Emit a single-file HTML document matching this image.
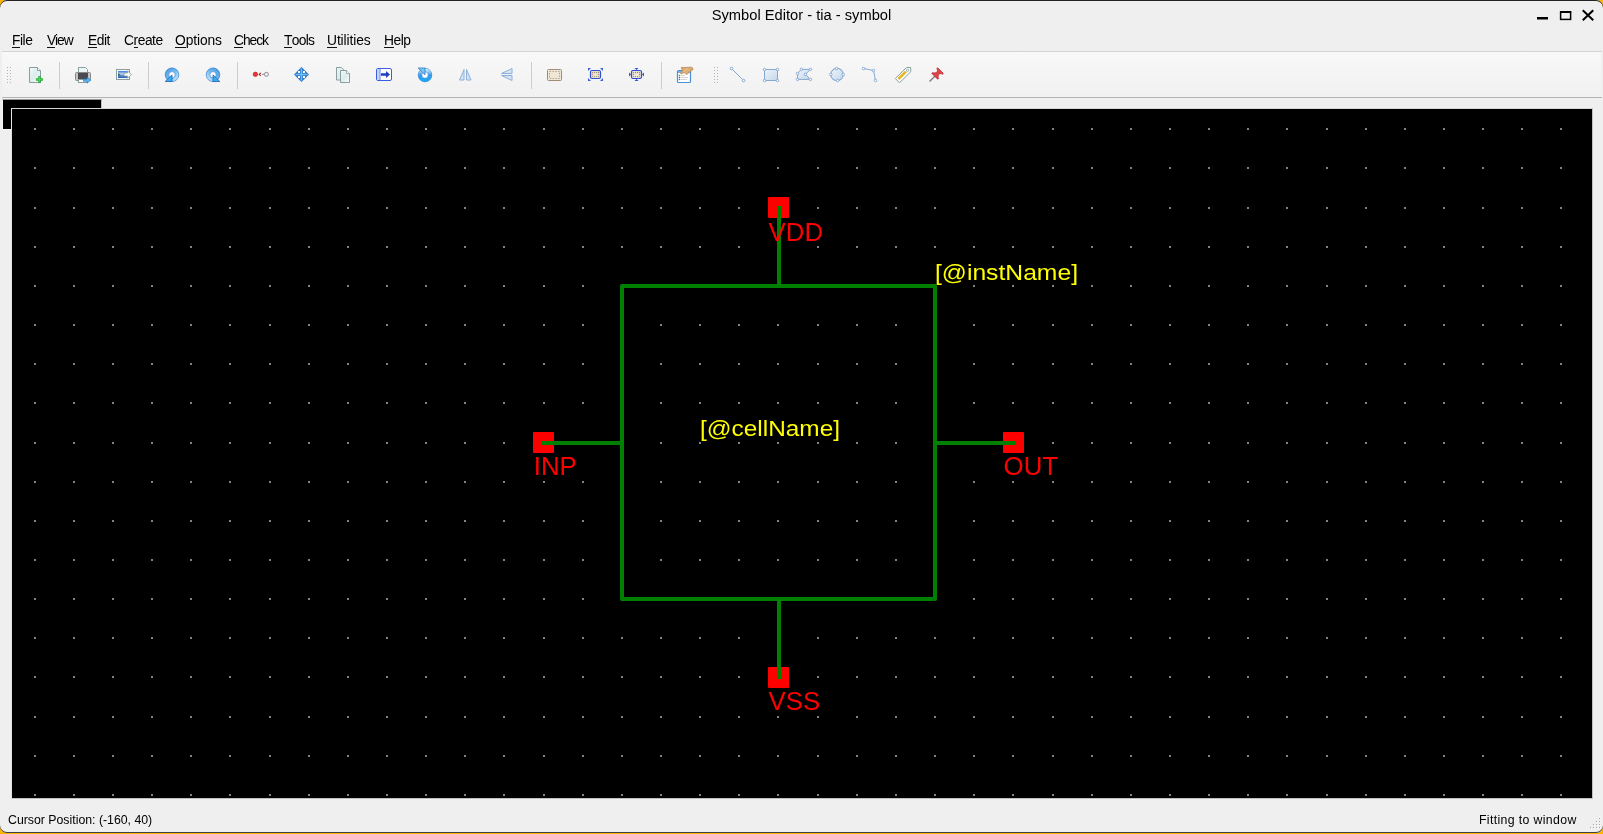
<!DOCTYPE html>
<html><head><meta charset="utf-8">
<style>
html,body{margin:0;padding:0;width:1603px;height:834px;overflow:hidden;background:#ffb400;}
body{position:relative;font-family:"Liberation Sans",sans-serif;}
.win{position:absolute;left:0;top:0;width:1603px;height:833px;background:#efefef;border-radius:7px;box-shadow:inset 0 1px 0 #232323, inset 0 -1px 0 #3a3f48;overflow:hidden;}
.topline{position:absolute;left:0;top:0;width:1603px;height:1px;background:#232323;}
.botline{position:absolute;left:0;top:832px;width:1603px;height:1px;background:#3a3f48;}
.t{position:absolute;white-space:pre;color:#000;line-height:1;will-change:transform;}
.title{left:0;width:1603px;text-align:center;top:8px;font-size:14.7px;color:#000;}
.menu{top:34px;font-size:13.8px;letter-spacing:-0.45px;color:#000;}
.menu u{text-decoration:none;box-shadow:inset 0 -1px 0 #111;display:inline-block;height:14px;}
.tbline1{position:absolute;left:2px;top:51px;width:1600px;height:1px;background:#d4d4d4;}
.toolbar{position:absolute;left:2px;top:52px;width:1599px;height:45px;background:linear-gradient(#f8f8f8,#f1f1f1);}
.tbline2{position:absolute;left:2px;top:97px;width:1600px;height:1px;background:#b4b4b4;}
.sep{position:absolute;top:62px;width:1px;height:27px;background:#c8c8c8;}
.smallblk{position:absolute;left:2px;top:99px;width:98px;height:29px;background:#000;border-top:1px solid #9a9a9a;border-right:1px solid #c0c0c0;border-left:1px solid #f6f6f6;border-bottom:1px solid #f6f6f6;box-sizing:content-box;}
.canvas{position:absolute;left:11px;top:108px;width:1580px;height:689px;background:#000;border-top:1px solid #d6d6d6;border-left:1px solid #e2e2e2;border-right:1px solid #c0c0c0;border-bottom:1px solid #c0c0c0;box-sizing:content-box;}
.status{font-size:12.3px;color:#000;top:814px;}
</style></head><body>
<div class="win">
<div class="t title">Symbol Editor - tia - symbol</div>
<svg style="position:absolute;left:0;top:0" width="1603" height="30">
 <rect x="1537" y="17" width="11" height="2.5" fill="#000"/>
 <rect x="1560.6" y="12" width="10" height="7.4" fill="none" stroke="#000" stroke-width="1.5"/>
 <rect x="1560" y="11" width="11.2" height="2" fill="#000"/>
 <path d="M1583.5 11 L1592.5 19.5 M1592.5 11 L1583.5 19.5" stroke="#000" stroke-width="2" stroke-linecap="square"/>
</svg>
<div class="t menu" style="left:12px"><u>F</u>ile</div>
<div class="t menu" style="left:46.5px;letter-spacing:-1.1px"><u>V</u>iew</div>
<div class="t menu" style="left:88px"><u>E</u>dit</div>
<div class="t menu" style="left:124px">C<u>r</u>eate</div>
<div class="t menu" style="left:175px;letter-spacing:-0.1px"><u>O</u>ptions</div>
<div class="t menu" style="left:233.8px;letter-spacing:-1.05px"><u>C</u>heck</div>
<div class="t menu" style="left:284px;letter-spacing:-0.7px"><u>T</u>ools</div>
<div class="t menu" style="left:327px;letter-spacing:-0.1px"><u>U</u>tilities</div>
<div class="t menu" style="left:384px"><u>H</u>elp</div>
<div class="tbline1"></div>
<div class="toolbar"></div>
<div class="tbline2"></div>
<svg style="position:absolute;left:0;top:0" width="1000" height="98">
 <defs>
  <linearGradient id="docg" x1="0" y1="0" x2="1" y2="1"><stop offset="0" stop-color="#f2fbfb"/><stop offset=".5" stop-color="#dcecec"/><stop offset="1" stop-color="#fbfdfd"/></linearGradient>
  <linearGradient id="blueg" x1="0" y1="0" x2="1" y2="1"><stop offset="0" stop-color="#4f9ee4"/><stop offset=".45" stop-color="#6cb8f0"/><stop offset="1" stop-color="#c0e6fa"/></linearGradient><linearGradient id="blueg2" x1="1" y1="0" x2="0" y2="1"><stop offset="0" stop-color="#4f9ee4"/><stop offset=".45" stop-color="#6cb8f0"/><stop offset="1" stop-color="#c0e6fa"/></linearGradient>
  <linearGradient id="ltb" x1="0" y1="0" x2="1" y2="1"><stop offset="0" stop-color="#eef4fa"/><stop offset="1" stop-color="#c4d6ea"/></linearGradient>
 </defs>
 <!-- handle dots -->
 <g fill="#b2b2b2">
  <rect x="7" y="67" width="1" height="1"/><rect x="10" y="67" width="1" height="1"/>
  <rect x="7" y="70" width="1" height="1"/><rect x="10" y="70" width="1" height="1"/>
  <rect x="7" y="73" width="1" height="1"/><rect x="10" y="73" width="1" height="1"/>
  <rect x="7" y="76" width="1" height="1"/><rect x="10" y="76" width="1" height="1"/>
  <rect x="7" y="79" width="1" height="1"/><rect x="10" y="79" width="1" height="1"/>
  <rect x="7" y="82" width="1" height="1"/><rect x="10" y="82" width="1" height="1"/>
  <rect x="714" y="67" width="1" height="1"/><rect x="717" y="67" width="1" height="1"/>
  <rect x="714" y="70" width="1" height="1"/><rect x="717" y="70" width="1" height="1"/>
  <rect x="714" y="73" width="1" height="1"/><rect x="717" y="73" width="1" height="1"/>
  <rect x="714" y="76" width="1" height="1"/><rect x="717" y="76" width="1" height="1"/>
  <rect x="714" y="79" width="1" height="1"/><rect x="717" y="79" width="1" height="1"/>
  <rect x="714" y="82" width="1" height="1"/><rect x="717" y="82" width="1" height="1"/>
 </g>
 <!-- separators -->
 <g fill="#cdcdcd">
  <rect x="59" y="62" width="1" height="27"/>
  <rect x="148" y="62" width="1" height="27"/>
  <rect x="237" y="62" width="1" height="27"/>
  <rect x="531" y="62" width="1" height="27"/>
  <rect x="661" y="62" width="1" height="27"/>
 </g>
 <!-- new -->
 <path d="M29.5 67.5h8l3 3v12h-11z" fill="url(#docg)" stroke="#8a9e9e"/>
 <path d="M37.5 67.5v3h3" fill="#fff" stroke="#8a9e9e"/>
 <path d="M38.6 76.4h1.8v2.2h2.2v1.8h-2.2v2.2h-1.8v-2.2h-2.2v-1.8h2.2z" fill="#48e058" stroke="#1c9c2c" stroke-width=".7"/>
 <!-- print -->
 <path d="M78.5 67.5h7l2 2v3h-9z" fill="#eaf6f6" stroke="#8a9e9e"/>
 <rect x="75.5" y="72.5" width="15" height="8" rx="1" fill="#c4c4c4" stroke="#8a8a8a"/>
 <rect x="78" y="73" width="10" height="6" fill="#4a4a50"/>
 <rect x="78.5" y="79.5" width="9" height="3" fill="#fff" stroke="#8a9e9e"/>
 <path d="M83.5 79.2h3.6v-1.9l3.6 2.9-3.6 2.9v-1.9h-3.6z" fill="#56c0f4" stroke="#2070c4" stroke-width=".7"/>
 <!-- export -->
 <rect x="116.5" y="69.5" width="13" height="10" fill="#f4fbfb" stroke="#8a9e9e"/>
 <defs><linearGradient id="imgg" x1="0" y1="0" x2="0" y2="1"><stop offset="0" stop-color="#3a78e0"/><stop offset=".45" stop-color="#c8dcf4"/><stop offset=".6" stop-color="#6a98d0"/><stop offset="1" stop-color="#2a58b8"/></linearGradient></defs>
 <rect x="118" y="71" width="9" height="7" fill="url(#imgg)"/>
 <path d="M118 73.2q2 .8 3 2.3h-3z" fill="#2e6a40"/>
 <path d="M124 73h3.5v-2.2l4 3.7-4 3.7v-2.2h-3.5z" fill="#fff" stroke="#8a9e9e" stroke-width=".9"/>
 <!-- undo -->
 <circle cx="172" cy="74.8" r="5" fill="none" stroke="url(#blueg)" stroke-width="4"/>
 <circle cx="172" cy="74.8" r="6.8" fill="none" stroke="#3f86d4" stroke-width=".7"/>
 <circle cx="172" cy="74.8" r="3.2" fill="#fff" stroke="#3f86d4" stroke-width=".7"/>
 <path d="M165.2 81.5h6.8v-6.6z" fill="#36aef4" stroke="#1f5fb0" stroke-width=".8"/>
 <!-- redo -->
 <circle cx="213" cy="74.8" r="5" fill="none" stroke="url(#blueg2)" stroke-width="4"/>
 <circle cx="213" cy="74.8" r="6.8" fill="none" stroke="#3f86d4" stroke-width=".7"/>
 <circle cx="213" cy="74.8" r="3.2" fill="#fff" stroke="#3f86d4" stroke-width=".7"/>
 <path d="M219.8 81.5h-6.8v-6.6z" fill="#36aef4" stroke="#1f5fb0" stroke-width=".8"/>
 <!-- pin connect -->
 <circle cx="255.4" cy="74.3" r="2.2" fill="#e83838" stroke="#b01818" stroke-width=".6"/>
 <path d="M260.8 72.8l-1.6 1.5 1.6 1.5" fill="none" stroke="#b02020" stroke-width="1.1"/>
 <path d="M262 74.3h2.2" stroke="#909090" stroke-width="1"/>
 <circle cx="266.4" cy="74.3" r="2" fill="#f4f4f4" stroke="#8a8a8a" stroke-width="1"/>
 <!-- move -->
 <path d="M301.5 67l7.5 7.5-7.5 7.5-7.5-7.5z" fill="#2f78cc"/>
 <path d="M301.5 68.5v12M295.5 74.5h12" stroke="#6cc0f4" stroke-width="1.5"/>
 <g fill="#fff"><rect x="298" y="71" width="2" height="2"/><rect x="303" y="71" width="2" height="2"/><rect x="298" y="76" width="2" height="2"/><rect x="303" y="76" width="2" height="2"/></g>
 <!-- copy -->
 <path d="M336.5 67.5h5l2 2v10.5h-7z" fill="url(#docg)" stroke="#8a9e9e"/>
 <path d="M340.5 70.5h6l3 3v9h-9z" fill="url(#docg)" stroke="#8a9e9e"/>
 <path d="M346.5 70.5v3h3" fill="#fff" stroke="#8a9e9e" stroke-width=".8"/>
 <!-- stretch -->
 <rect x="376.5" y="68.5" width="15" height="12" rx="1.5" fill="#fff" stroke="#3a5ee0"/>
 <rect x="377" y="69" width="2.5" height="11" fill="#c8d4f4"/>
 <path d="M380 69v11" stroke="#3a5ee0" stroke-width=".8"/>
 <path d="M381 73.2h5v-2.2l4 3.5-4 3.5v-2.2h-5z" fill="#2040c0"/>
 <!-- rotate -->
 <defs><linearGradient id="rotg" x1="0" y1="0" x2="0" y2="1"><stop offset="0" stop-color="#c8e8fa"/><stop offset=".5" stop-color="#3c9ae4"/><stop offset="1" stop-color="#18a8f8"/></linearGradient></defs>
 <circle cx="425" cy="75" r="5" fill="none" stroke="url(#rotg)" stroke-width="4"/>
 <circle cx="425" cy="75" r="6.8" fill="none" stroke="#3f86d4" stroke-width=".6"/>
 <circle cx="425" cy="75" r="3.2" fill="#fff" stroke="#3f86d4" stroke-width=".6"/>
 <path d="M418.2 68h6.8v6.8z" fill="#7cc8f4" stroke="#2a78c8" stroke-width=".8"/>
 <!-- flip h -->
 <path d="M459.5 80l4.5-10.5v10.5z M466.5 69.5l4.5 10.5h-4.5z" fill="#d6e4f2" stroke="#8db0d8" stroke-width="1"/>
 <!-- flip v -->
 <path d="M501.5 73.5l10.5-5v5z M501.5 75.5h10.5v5z" fill="#d6e4f2" stroke="#8db0d8" stroke-width="1"/>
 <!-- fit -->
 <rect x="547.5" y="69.5" width="14" height="11" rx="1" fill="#efe6d6" stroke="#a08c78"/>
 <rect x="549.5" y="71.5" width="10" height="7" fill="none" stroke="#a89a88" stroke-width=".8" stroke-dasharray="1.6 1.2"/>
 <!-- zoom fit -->
 <g fill="#3a5ee0"><path d="M588 68h3l-3 3z"/><path d="M603 68h-3l3 3z"/><path d="M588 81h3l-3-3z"/><path d="M603 81h-3l3-3z"/></g>
 <rect x="590.5" y="70.5" width="10" height="8" rx="1.5" fill="#ede4d0" stroke="#2e50d0" stroke-width="1.2"/>
 <g fill="#a48c74"><circle cx="592.40" cy="72.5" r=".65"/><circle cx="594.45" cy="72.5" r=".65"/><circle cx="596.50" cy="72.5" r=".65"/><circle cx="598.55" cy="72.5" r=".65"/><circle cx="592.40" cy="76.6" r=".65"/><circle cx="594.45" cy="76.6" r=".65"/><circle cx="596.50" cy="76.6" r=".65"/><circle cx="598.55" cy="76.6" r=".65"/><circle cx="592.40" cy="74.5" r=".65"/><circle cx="598.55" cy="74.5" r=".65"/></g>
 <!-- zoom to -->
 <rect x="631.5" y="70.5" width="10" height="8" rx="1.5" fill="#efe6d6" stroke="#2e50d0" stroke-width="1.2"/>
 <g fill="#a48c74"><circle cx="633.40" cy="72.5" r=".65"/><circle cx="635.45" cy="72.5" r=".65"/><circle cx="637.50" cy="72.5" r=".65"/><circle cx="639.55" cy="72.5" r=".65"/><circle cx="633.40" cy="76.6" r=".65"/><circle cx="635.45" cy="76.6" r=".65"/><circle cx="637.50" cy="76.6" r=".65"/><circle cx="639.55" cy="76.6" r=".65"/><circle cx="633.40" cy="74.5" r=".65"/><circle cx="639.55" cy="74.5" r=".65"/></g>
 <g fill="#2e50d0"><path d="M634.5 68h4l-2 2z"/><path d="M634.5 81h4l-2-2z"/><path d="M629 72.5v4l2-2z"/><path d="M644 72.5v4l-2-2z"/></g>
 <!-- props -->
 <rect x="677.5" y="70.5" width="13" height="12" rx="1" fill="#fff" stroke="#4a90d9" stroke-width="1.2"/>
 <rect x="678" y="71" width="12" height="2" fill="#78b4ec"/>
 <circle cx="679.5" cy="75.5" r=".8" fill="#30b030"/><circle cx="679.5" cy="77.5" r=".8" fill="#c04040"/><circle cx="679.5" cy="79.5" r=".8" fill="#4070e0"/>
 <path d="M681 75.5h4M681 77.5h7M681 79.5h6" stroke="#c8c8c8" stroke-width=".8"/>
 <path d="M681.2 67.5L691.3 67.2Q693.6 67.8 693 69.6L690 71.8 686.4 74.7 684.6 72.6 681 73.9 680.3 72.6 682.3 70.4Z" fill="#dcaa70" stroke="#a87440" stroke-width=".6" stroke-linejoin="round"/>
 <path d="M683 70.5l3 3M684.5 69l3.5 3.5M686.5 68l3 3M683.5 72l5-4" stroke="#f0d0a0" stroke-width=".6" opacity=".8"/>
 <!-- line -->
 <g fill="#fff" stroke="#7ea4d0" stroke-width="1">
  <path d="M732.5 69.5l10 10" />
  <circle cx="731.5" cy="68.5" r="1.25"/><circle cx="743.5" cy="80.5" r="1.25"/>
 </g>
 <!-- rect -->
 <rect x="764.5" y="69.5" width="13" height="11" fill="url(#ltb)" stroke="#86a8d2"/>
 <g fill="#fff" stroke="#7ea4d0" stroke-width=".9"><circle cx="764.5" cy="69.5" r="1.25"/><circle cx="777.5" cy="69.5" r="1.25"/><circle cx="764.5" cy="80.5" r="1.25"/><circle cx="777.5" cy="80.5" r="1.25"/></g>
 <!-- polygon -->
 <path d="M801.4 69.4h9l-5 5 5 5h-12.9v-6z" fill="url(#ltb)" stroke="#86a8d2"/>
 <g fill="#fff" stroke="#7ea4d0" stroke-width=".9"><circle cx="801.4" cy="69.4" r="1.25"/><circle cx="810.4" cy="69.4" r="1.25"/><circle cx="805.4" cy="74.4" r="1.25"/><circle cx="810.4" cy="79.4" r="1.25"/><circle cx="797.5" cy="79.4" r="1.25"/><circle cx="797.5" cy="73.4" r="1.25"/></g>
 <!-- circle -->
 <circle cx="837" cy="74.5" r="6.2" fill="url(#ltb)" stroke="#86a8d2" stroke-width="1.1"/>
 <g fill="#fff" stroke="#7ea4d0" stroke-width=".9"><circle cx="836.5" cy="68.5" r="1.25"/><circle cx="830.8" cy="74.5" r="1.25"/><circle cx="843.3" cy="74.5" r="1.25"/><circle cx="837.5" cy="80.5" r="1.25"/></g>
 <!-- polyline -->
 <path d="M863.5 68.5l10 2 2 10" fill="none" stroke="#86a8d2"/>
 <g fill="#fff" stroke="#7ea4d0" stroke-width=".9"><circle cx="863.5" cy="68.5" r="1.25"/><circle cx="873.5" cy="70.5" r="1.25"/><circle cx="875.5" cy="80.5" r="1.25"/></g>
 <!-- label -->
 <path d="M895.3 78.5l11.2-11h4.2v4.2l-11.2 11.2z" fill="#f8fcfc" stroke="#8a9e9e"/>
 <path d="M898.5 79l7.3-7.3" stroke="#eab420" stroke-width="2.6"/>
 <circle cx="907.5" cy="70.3" r="1.2" fill="none" stroke="#8a9e9e" stroke-width=".8"/>
 <!-- pin -->
 <g transform="translate(937.3 73.8) rotate(45)">
  <path d="M0 3.5V11" stroke="#7a7a7a" stroke-width="1.3"/>
  <path d="M-4 -4.6H4V-3H2.4L1.2 -0.5 3 2H4.2V3.6H-4.2V2H-3L-1.2 -0.5 -2.4 -3H-4Z" fill="#e2444c" stroke="#b02a32" stroke-width=".7" stroke-linejoin="round"/>
 </g>
</svg>

<div class="smallblk"></div>
<div class="canvas"></div>
<svg style="position:absolute;left:0;top:0" width="1603" height="834" shape-rendering="crispEdges">
 <rect x="12" y="109" width="1580" height="689" fill="#000"/>
 <path fill="#828282" d="M34 128h2v2h-2zM73 128h2v2h-2zM112 128h2v2h-2zM151 128h2v2h-2zM190 128h2v2h-2zM229 128h2v2h-2zM269 128h2v2h-2zM308 128h2v2h-2zM347 128h2v2h-2zM386 128h2v2h-2zM425 128h2v2h-2zM464 128h2v2h-2zM503 128h2v2h-2zM543 128h2v2h-2zM582 128h2v2h-2zM621 128h2v2h-2zM660 128h2v2h-2zM699 128h2v2h-2zM738 128h2v2h-2zM777 128h2v2h-2zM817 128h2v2h-2zM856 128h2v2h-2zM895 128h2v2h-2zM934 128h2v2h-2zM973 128h2v2h-2zM1012 128h2v2h-2zM1052 128h2v2h-2zM1091 128h2v2h-2zM1130 128h2v2h-2zM1169 128h2v2h-2zM1208 128h2v2h-2zM1247 128h2v2h-2zM1286 128h2v2h-2zM1326 128h2v2h-2zM1365 128h2v2h-2zM1404 128h2v2h-2zM1443 128h2v2h-2zM1482 128h2v2h-2zM1521 128h2v2h-2zM1560 128h2v2h-2zM34 167h2v2h-2zM73 167h2v2h-2zM112 167h2v2h-2zM151 167h2v2h-2zM190 167h2v2h-2zM229 167h2v2h-2zM269 167h2v2h-2zM308 167h2v2h-2zM347 167h2v2h-2zM386 167h2v2h-2zM425 167h2v2h-2zM464 167h2v2h-2zM503 167h2v2h-2zM543 167h2v2h-2zM582 167h2v2h-2zM621 167h2v2h-2zM660 167h2v2h-2zM699 167h2v2h-2zM738 167h2v2h-2zM777 167h2v2h-2zM817 167h2v2h-2zM856 167h2v2h-2zM895 167h2v2h-2zM934 167h2v2h-2zM973 167h2v2h-2zM1012 167h2v2h-2zM1052 167h2v2h-2zM1091 167h2v2h-2zM1130 167h2v2h-2zM1169 167h2v2h-2zM1208 167h2v2h-2zM1247 167h2v2h-2zM1286 167h2v2h-2zM1326 167h2v2h-2zM1365 167h2v2h-2zM1404 167h2v2h-2zM1443 167h2v2h-2zM1482 167h2v2h-2zM1521 167h2v2h-2zM1560 167h2v2h-2zM34 207h2v2h-2zM73 207h2v2h-2zM112 207h2v2h-2zM151 207h2v2h-2zM190 207h2v2h-2zM229 207h2v2h-2zM269 207h2v2h-2zM308 207h2v2h-2zM347 207h2v2h-2zM386 207h2v2h-2zM425 207h2v2h-2zM464 207h2v2h-2zM503 207h2v2h-2zM543 207h2v2h-2zM582 207h2v2h-2zM621 207h2v2h-2zM660 207h2v2h-2zM699 207h2v2h-2zM738 207h2v2h-2zM777 207h2v2h-2zM817 207h2v2h-2zM856 207h2v2h-2zM895 207h2v2h-2zM934 207h2v2h-2zM973 207h2v2h-2zM1012 207h2v2h-2zM1052 207h2v2h-2zM1091 207h2v2h-2zM1130 207h2v2h-2zM1169 207h2v2h-2zM1208 207h2v2h-2zM1247 207h2v2h-2zM1286 207h2v2h-2zM1326 207h2v2h-2zM1365 207h2v2h-2zM1404 207h2v2h-2zM1443 207h2v2h-2zM1482 207h2v2h-2zM1521 207h2v2h-2zM1560 207h2v2h-2zM34 246h2v2h-2zM73 246h2v2h-2zM112 246h2v2h-2zM151 246h2v2h-2zM190 246h2v2h-2zM229 246h2v2h-2zM269 246h2v2h-2zM308 246h2v2h-2zM347 246h2v2h-2zM386 246h2v2h-2zM425 246h2v2h-2zM464 246h2v2h-2zM503 246h2v2h-2zM543 246h2v2h-2zM582 246h2v2h-2zM621 246h2v2h-2zM660 246h2v2h-2zM699 246h2v2h-2zM738 246h2v2h-2zM777 246h2v2h-2zM817 246h2v2h-2zM856 246h2v2h-2zM895 246h2v2h-2zM934 246h2v2h-2zM973 246h2v2h-2zM1012 246h2v2h-2zM1052 246h2v2h-2zM1091 246h2v2h-2zM1130 246h2v2h-2zM1169 246h2v2h-2zM1208 246h2v2h-2zM1247 246h2v2h-2zM1286 246h2v2h-2zM1326 246h2v2h-2zM1365 246h2v2h-2zM1404 246h2v2h-2zM1443 246h2v2h-2zM1482 246h2v2h-2zM1521 246h2v2h-2zM1560 246h2v2h-2zM34 285h2v2h-2zM73 285h2v2h-2zM112 285h2v2h-2zM151 285h2v2h-2zM190 285h2v2h-2zM229 285h2v2h-2zM269 285h2v2h-2zM308 285h2v2h-2zM347 285h2v2h-2zM386 285h2v2h-2zM425 285h2v2h-2zM464 285h2v2h-2zM503 285h2v2h-2zM543 285h2v2h-2zM582 285h2v2h-2zM621 285h2v2h-2zM660 285h2v2h-2zM699 285h2v2h-2zM738 285h2v2h-2zM777 285h2v2h-2zM817 285h2v2h-2zM856 285h2v2h-2zM895 285h2v2h-2zM934 285h2v2h-2zM973 285h2v2h-2zM1012 285h2v2h-2zM1052 285h2v2h-2zM1091 285h2v2h-2zM1130 285h2v2h-2zM1169 285h2v2h-2zM1208 285h2v2h-2zM1247 285h2v2h-2zM1286 285h2v2h-2zM1326 285h2v2h-2zM1365 285h2v2h-2zM1404 285h2v2h-2zM1443 285h2v2h-2zM1482 285h2v2h-2zM1521 285h2v2h-2zM1560 285h2v2h-2zM34 324h2v2h-2zM73 324h2v2h-2zM112 324h2v2h-2zM151 324h2v2h-2zM190 324h2v2h-2zM229 324h2v2h-2zM269 324h2v2h-2zM308 324h2v2h-2zM347 324h2v2h-2zM386 324h2v2h-2zM425 324h2v2h-2zM464 324h2v2h-2zM503 324h2v2h-2zM543 324h2v2h-2zM582 324h2v2h-2zM621 324h2v2h-2zM660 324h2v2h-2zM699 324h2v2h-2zM738 324h2v2h-2zM777 324h2v2h-2zM817 324h2v2h-2zM856 324h2v2h-2zM895 324h2v2h-2zM934 324h2v2h-2zM973 324h2v2h-2zM1012 324h2v2h-2zM1052 324h2v2h-2zM1091 324h2v2h-2zM1130 324h2v2h-2zM1169 324h2v2h-2zM1208 324h2v2h-2zM1247 324h2v2h-2zM1286 324h2v2h-2zM1326 324h2v2h-2zM1365 324h2v2h-2zM1404 324h2v2h-2zM1443 324h2v2h-2zM1482 324h2v2h-2zM1521 324h2v2h-2zM1560 324h2v2h-2zM34 363h2v2h-2zM73 363h2v2h-2zM112 363h2v2h-2zM151 363h2v2h-2zM190 363h2v2h-2zM229 363h2v2h-2zM269 363h2v2h-2zM308 363h2v2h-2zM347 363h2v2h-2zM386 363h2v2h-2zM425 363h2v2h-2zM464 363h2v2h-2zM503 363h2v2h-2zM543 363h2v2h-2zM582 363h2v2h-2zM621 363h2v2h-2zM660 363h2v2h-2zM699 363h2v2h-2zM738 363h2v2h-2zM777 363h2v2h-2zM817 363h2v2h-2zM856 363h2v2h-2zM895 363h2v2h-2zM934 363h2v2h-2zM973 363h2v2h-2zM1012 363h2v2h-2zM1052 363h2v2h-2zM1091 363h2v2h-2zM1130 363h2v2h-2zM1169 363h2v2h-2zM1208 363h2v2h-2zM1247 363h2v2h-2zM1286 363h2v2h-2zM1326 363h2v2h-2zM1365 363h2v2h-2zM1404 363h2v2h-2zM1443 363h2v2h-2zM1482 363h2v2h-2zM1521 363h2v2h-2zM1560 363h2v2h-2zM34 402h2v2h-2zM73 402h2v2h-2zM112 402h2v2h-2zM151 402h2v2h-2zM190 402h2v2h-2zM229 402h2v2h-2zM269 402h2v2h-2zM308 402h2v2h-2zM347 402h2v2h-2zM386 402h2v2h-2zM425 402h2v2h-2zM464 402h2v2h-2zM503 402h2v2h-2zM543 402h2v2h-2zM582 402h2v2h-2zM621 402h2v2h-2zM660 402h2v2h-2zM699 402h2v2h-2zM738 402h2v2h-2zM777 402h2v2h-2zM817 402h2v2h-2zM856 402h2v2h-2zM895 402h2v2h-2zM934 402h2v2h-2zM973 402h2v2h-2zM1012 402h2v2h-2zM1052 402h2v2h-2zM1091 402h2v2h-2zM1130 402h2v2h-2zM1169 402h2v2h-2zM1208 402h2v2h-2zM1247 402h2v2h-2zM1286 402h2v2h-2zM1326 402h2v2h-2zM1365 402h2v2h-2zM1404 402h2v2h-2zM1443 402h2v2h-2zM1482 402h2v2h-2zM1521 402h2v2h-2zM1560 402h2v2h-2zM34 442h2v2h-2zM73 442h2v2h-2zM112 442h2v2h-2zM151 442h2v2h-2zM190 442h2v2h-2zM229 442h2v2h-2zM269 442h2v2h-2zM308 442h2v2h-2zM347 442h2v2h-2zM386 442h2v2h-2zM425 442h2v2h-2zM464 442h2v2h-2zM503 442h2v2h-2zM543 442h2v2h-2zM582 442h2v2h-2zM621 442h2v2h-2zM660 442h2v2h-2zM699 442h2v2h-2zM738 442h2v2h-2zM777 442h2v2h-2zM817 442h2v2h-2zM856 442h2v2h-2zM895 442h2v2h-2zM934 442h2v2h-2zM973 442h2v2h-2zM1012 442h2v2h-2zM1052 442h2v2h-2zM1091 442h2v2h-2zM1130 442h2v2h-2zM1169 442h2v2h-2zM1208 442h2v2h-2zM1247 442h2v2h-2zM1286 442h2v2h-2zM1326 442h2v2h-2zM1365 442h2v2h-2zM1404 442h2v2h-2zM1443 442h2v2h-2zM1482 442h2v2h-2zM1521 442h2v2h-2zM1560 442h2v2h-2zM34 481h2v2h-2zM73 481h2v2h-2zM112 481h2v2h-2zM151 481h2v2h-2zM190 481h2v2h-2zM229 481h2v2h-2zM269 481h2v2h-2zM308 481h2v2h-2zM347 481h2v2h-2zM386 481h2v2h-2zM425 481h2v2h-2zM464 481h2v2h-2zM503 481h2v2h-2zM543 481h2v2h-2zM582 481h2v2h-2zM621 481h2v2h-2zM660 481h2v2h-2zM699 481h2v2h-2zM738 481h2v2h-2zM777 481h2v2h-2zM817 481h2v2h-2zM856 481h2v2h-2zM895 481h2v2h-2zM934 481h2v2h-2zM973 481h2v2h-2zM1012 481h2v2h-2zM1052 481h2v2h-2zM1091 481h2v2h-2zM1130 481h2v2h-2zM1169 481h2v2h-2zM1208 481h2v2h-2zM1247 481h2v2h-2zM1286 481h2v2h-2zM1326 481h2v2h-2zM1365 481h2v2h-2zM1404 481h2v2h-2zM1443 481h2v2h-2zM1482 481h2v2h-2zM1521 481h2v2h-2zM1560 481h2v2h-2zM34 520h2v2h-2zM73 520h2v2h-2zM112 520h2v2h-2zM151 520h2v2h-2zM190 520h2v2h-2zM229 520h2v2h-2zM269 520h2v2h-2zM308 520h2v2h-2zM347 520h2v2h-2zM386 520h2v2h-2zM425 520h2v2h-2zM464 520h2v2h-2zM503 520h2v2h-2zM543 520h2v2h-2zM582 520h2v2h-2zM621 520h2v2h-2zM660 520h2v2h-2zM699 520h2v2h-2zM738 520h2v2h-2zM777 520h2v2h-2zM817 520h2v2h-2zM856 520h2v2h-2zM895 520h2v2h-2zM934 520h2v2h-2zM973 520h2v2h-2zM1012 520h2v2h-2zM1052 520h2v2h-2zM1091 520h2v2h-2zM1130 520h2v2h-2zM1169 520h2v2h-2zM1208 520h2v2h-2zM1247 520h2v2h-2zM1286 520h2v2h-2zM1326 520h2v2h-2zM1365 520h2v2h-2zM1404 520h2v2h-2zM1443 520h2v2h-2zM1482 520h2v2h-2zM1521 520h2v2h-2zM1560 520h2v2h-2zM34 559h2v2h-2zM73 559h2v2h-2zM112 559h2v2h-2zM151 559h2v2h-2zM190 559h2v2h-2zM229 559h2v2h-2zM269 559h2v2h-2zM308 559h2v2h-2zM347 559h2v2h-2zM386 559h2v2h-2zM425 559h2v2h-2zM464 559h2v2h-2zM503 559h2v2h-2zM543 559h2v2h-2zM582 559h2v2h-2zM621 559h2v2h-2zM660 559h2v2h-2zM699 559h2v2h-2zM738 559h2v2h-2zM777 559h2v2h-2zM817 559h2v2h-2zM856 559h2v2h-2zM895 559h2v2h-2zM934 559h2v2h-2zM973 559h2v2h-2zM1012 559h2v2h-2zM1052 559h2v2h-2zM1091 559h2v2h-2zM1130 559h2v2h-2zM1169 559h2v2h-2zM1208 559h2v2h-2zM1247 559h2v2h-2zM1286 559h2v2h-2zM1326 559h2v2h-2zM1365 559h2v2h-2zM1404 559h2v2h-2zM1443 559h2v2h-2zM1482 559h2v2h-2zM1521 559h2v2h-2zM1560 559h2v2h-2zM34 598h2v2h-2zM73 598h2v2h-2zM112 598h2v2h-2zM151 598h2v2h-2zM190 598h2v2h-2zM229 598h2v2h-2zM269 598h2v2h-2zM308 598h2v2h-2zM347 598h2v2h-2zM386 598h2v2h-2zM425 598h2v2h-2zM464 598h2v2h-2zM503 598h2v2h-2zM543 598h2v2h-2zM582 598h2v2h-2zM621 598h2v2h-2zM660 598h2v2h-2zM699 598h2v2h-2zM738 598h2v2h-2zM777 598h2v2h-2zM817 598h2v2h-2zM856 598h2v2h-2zM895 598h2v2h-2zM934 598h2v2h-2zM973 598h2v2h-2zM1012 598h2v2h-2zM1052 598h2v2h-2zM1091 598h2v2h-2zM1130 598h2v2h-2zM1169 598h2v2h-2zM1208 598h2v2h-2zM1247 598h2v2h-2zM1286 598h2v2h-2zM1326 598h2v2h-2zM1365 598h2v2h-2zM1404 598h2v2h-2zM1443 598h2v2h-2zM1482 598h2v2h-2zM1521 598h2v2h-2zM1560 598h2v2h-2zM34 637h2v2h-2zM73 637h2v2h-2zM112 637h2v2h-2zM151 637h2v2h-2zM190 637h2v2h-2zM229 637h2v2h-2zM269 637h2v2h-2zM308 637h2v2h-2zM347 637h2v2h-2zM386 637h2v2h-2zM425 637h2v2h-2zM464 637h2v2h-2zM503 637h2v2h-2zM543 637h2v2h-2zM582 637h2v2h-2zM621 637h2v2h-2zM660 637h2v2h-2zM699 637h2v2h-2zM738 637h2v2h-2zM777 637h2v2h-2zM817 637h2v2h-2zM856 637h2v2h-2zM895 637h2v2h-2zM934 637h2v2h-2zM973 637h2v2h-2zM1012 637h2v2h-2zM1052 637h2v2h-2zM1091 637h2v2h-2zM1130 637h2v2h-2zM1169 637h2v2h-2zM1208 637h2v2h-2zM1247 637h2v2h-2zM1286 637h2v2h-2zM1326 637h2v2h-2zM1365 637h2v2h-2zM1404 637h2v2h-2zM1443 637h2v2h-2zM1482 637h2v2h-2zM1521 637h2v2h-2zM1560 637h2v2h-2zM34 676h2v2h-2zM73 676h2v2h-2zM112 676h2v2h-2zM151 676h2v2h-2zM190 676h2v2h-2zM229 676h2v2h-2zM269 676h2v2h-2zM308 676h2v2h-2zM347 676h2v2h-2zM386 676h2v2h-2zM425 676h2v2h-2zM464 676h2v2h-2zM503 676h2v2h-2zM543 676h2v2h-2zM582 676h2v2h-2zM621 676h2v2h-2zM660 676h2v2h-2zM699 676h2v2h-2zM738 676h2v2h-2zM777 676h2v2h-2zM817 676h2v2h-2zM856 676h2v2h-2zM895 676h2v2h-2zM934 676h2v2h-2zM973 676h2v2h-2zM1012 676h2v2h-2zM1052 676h2v2h-2zM1091 676h2v2h-2zM1130 676h2v2h-2zM1169 676h2v2h-2zM1208 676h2v2h-2zM1247 676h2v2h-2zM1286 676h2v2h-2zM1326 676h2v2h-2zM1365 676h2v2h-2zM1404 676h2v2h-2zM1443 676h2v2h-2zM1482 676h2v2h-2zM1521 676h2v2h-2zM1560 676h2v2h-2zM34 716h2v2h-2zM73 716h2v2h-2zM112 716h2v2h-2zM151 716h2v2h-2zM190 716h2v2h-2zM229 716h2v2h-2zM269 716h2v2h-2zM308 716h2v2h-2zM347 716h2v2h-2zM386 716h2v2h-2zM425 716h2v2h-2zM464 716h2v2h-2zM503 716h2v2h-2zM543 716h2v2h-2zM582 716h2v2h-2zM621 716h2v2h-2zM660 716h2v2h-2zM699 716h2v2h-2zM738 716h2v2h-2zM777 716h2v2h-2zM817 716h2v2h-2zM856 716h2v2h-2zM895 716h2v2h-2zM934 716h2v2h-2zM973 716h2v2h-2zM1012 716h2v2h-2zM1052 716h2v2h-2zM1091 716h2v2h-2zM1130 716h2v2h-2zM1169 716h2v2h-2zM1208 716h2v2h-2zM1247 716h2v2h-2zM1286 716h2v2h-2zM1326 716h2v2h-2zM1365 716h2v2h-2zM1404 716h2v2h-2zM1443 716h2v2h-2zM1482 716h2v2h-2zM1521 716h2v2h-2zM1560 716h2v2h-2zM34 755h2v2h-2zM73 755h2v2h-2zM112 755h2v2h-2zM151 755h2v2h-2zM190 755h2v2h-2zM229 755h2v2h-2zM269 755h2v2h-2zM308 755h2v2h-2zM347 755h2v2h-2zM386 755h2v2h-2zM425 755h2v2h-2zM464 755h2v2h-2zM503 755h2v2h-2zM543 755h2v2h-2zM582 755h2v2h-2zM621 755h2v2h-2zM660 755h2v2h-2zM699 755h2v2h-2zM738 755h2v2h-2zM777 755h2v2h-2zM817 755h2v2h-2zM856 755h2v2h-2zM895 755h2v2h-2zM934 755h2v2h-2zM973 755h2v2h-2zM1012 755h2v2h-2zM1052 755h2v2h-2zM1091 755h2v2h-2zM1130 755h2v2h-2zM1169 755h2v2h-2zM1208 755h2v2h-2zM1247 755h2v2h-2zM1286 755h2v2h-2zM1326 755h2v2h-2zM1365 755h2v2h-2zM1404 755h2v2h-2zM1443 755h2v2h-2zM1482 755h2v2h-2zM1521 755h2v2h-2zM1560 755h2v2h-2zM34 794h2v2h-2zM73 794h2v2h-2zM112 794h2v2h-2zM151 794h2v2h-2zM190 794h2v2h-2zM229 794h2v2h-2zM269 794h2v2h-2zM308 794h2v2h-2zM347 794h2v2h-2zM386 794h2v2h-2zM425 794h2v2h-2zM464 794h2v2h-2zM503 794h2v2h-2zM543 794h2v2h-2zM582 794h2v2h-2zM621 794h2v2h-2zM660 794h2v2h-2zM699 794h2v2h-2zM738 794h2v2h-2zM777 794h2v2h-2zM817 794h2v2h-2zM856 794h2v2h-2zM895 794h2v2h-2zM934 794h2v2h-2zM973 794h2v2h-2zM1012 794h2v2h-2zM1052 794h2v2h-2zM1091 794h2v2h-2zM1130 794h2v2h-2zM1169 794h2v2h-2zM1208 794h2v2h-2zM1247 794h2v2h-2zM1286 794h2v2h-2zM1326 794h2v2h-2zM1365 794h2v2h-2zM1404 794h2v2h-2zM1443 794h2v2h-2zM1482 794h2v2h-2zM1521 794h2v2h-2zM1560 794h2v2h-2z"/>
</svg>
<svg style="position:absolute;left:0;top:0;will-change:transform" width="1603" height="834">
 <g fill="#f00">
  <rect x="768" y="197" width="21" height="21" rx="1"/>
  <rect x="533" y="432" width="21" height="21" rx="1"/>
  <rect x="1003" y="432" width="21" height="21" rx="1"/>
  <rect x="768" y="667" width="21" height="21" rx="1"/>
 </g>
 <g stroke="#008000" stroke-width="4" fill="none">
  <rect x="622" y="286" width="313" height="313" stroke-linejoin="round"/>
  <path d="M779 206V286M779 599V679M542 443H622M935 443H1015"/>
 </g>
 <g font-family="Liberation Sans" fill="#f00" font-size="25.8">
  <text x="768.6" y="241">VDD</text>
  <text x="533.8" y="475">INP</text>
  <text x="1003.6" y="475">OUT</text>
  <text x="768.6" y="710">VSS</text>
 </g>
 <g font-family="Liberation Sans" fill="#ff0" font-size="22">
  <text x="935" y="280" textLength="143" lengthAdjust="spacingAndGlyphs">[@instName]</text>
  <text x="700" y="436" textLength="140" lengthAdjust="spacingAndGlyphs">[@cellName]</text>
 </g>
</svg>
<svg style="position:absolute;left:0;top:0" width="1603" height="834" shape-rendering="crispEdges"><g fill="#fdfdfd"><rect x="1600" y="819" width="1" height="1"/><rect x="1597" y="822" width="1" height="1"/><rect x="1600" y="822" width="1" height="1"/><rect x="1594" y="825" width="1" height="1"/><rect x="1597" y="825" width="1" height="1"/><rect x="1600" y="825" width="1" height="1"/><rect x="1591" y="828" width="1" height="1"/><rect x="1594" y="828" width="1" height="1"/><rect x="1597" y="828" width="1" height="1"/><rect x="1600" y="828" width="1" height="1"/></g><g fill="#a6a6a6"><rect x="1599" y="818" width="1" height="1"/><rect x="1596" y="821" width="1" height="1"/><rect x="1599" y="821" width="1" height="1"/><rect x="1593" y="824" width="1" height="1"/><rect x="1596" y="824" width="1" height="1"/><rect x="1599" y="824" width="1" height="1"/><rect x="1590" y="827" width="1" height="1"/><rect x="1593" y="827" width="1" height="1"/><rect x="1596" y="827" width="1" height="1"/><rect x="1599" y="827" width="1" height="1"/></g></svg>
<div class="t status" style="left:8px">Cursor Position: (-160, 40)</div>
<div class="t status" style="left:1479px;letter-spacing:0.36px">Fitting to window</div>
</div>
</body></html>
